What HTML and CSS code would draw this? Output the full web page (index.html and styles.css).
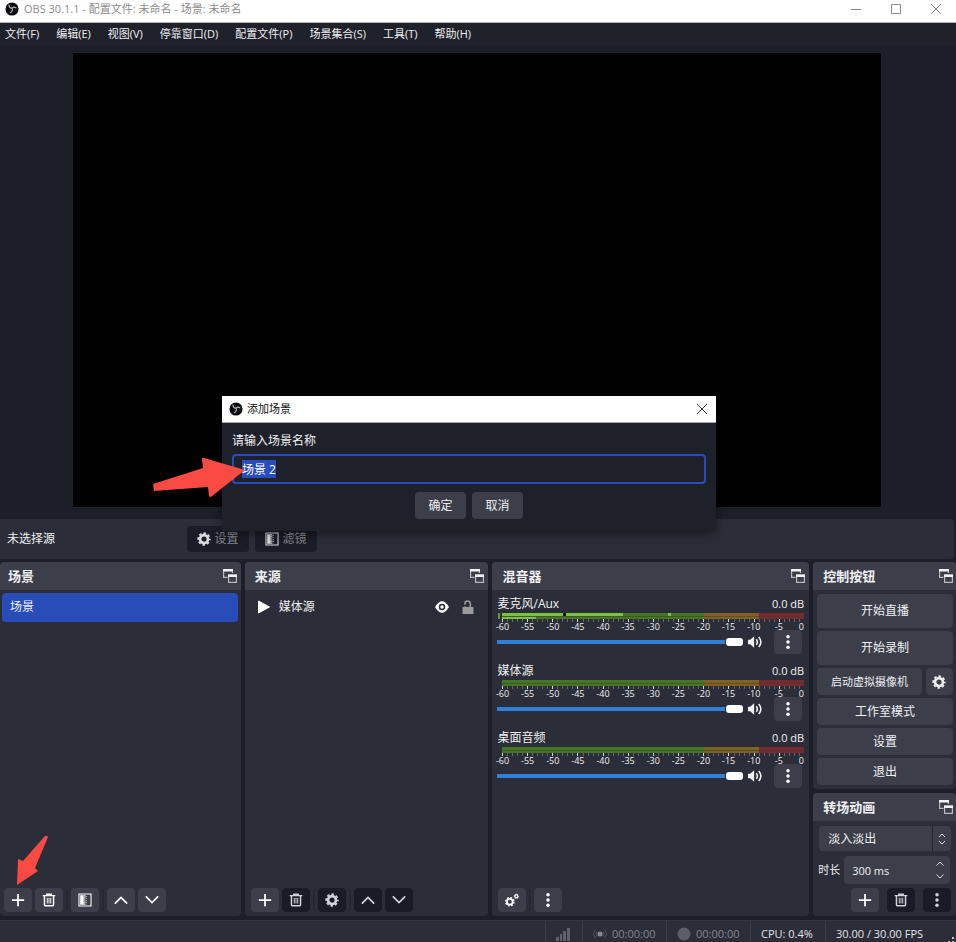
FILE: index.html
```html
<!DOCTYPE html>
<html lang="zh-CN">
<head>
  <meta charset="UTF-8" />
  <meta name="viewport" content="width=device-width, initial-scale=1.0" />
  <title>OBS 30.1.1</title>
  <link rel="stylesheet" href="styles.css">
</head>
<body>
  <svg class="sprite" aria-hidden="true">
    <symbol id="logo" viewBox="0 0 16 16">
      <circle cx="8" cy="8" r="7.5" fill="#0c0c0e"/>
      <g fill="none" stroke="#b4b4b8" stroke-width="1.3" stroke-linecap="round">
        <path d="M4.500 3.400C4.500 5.600 6 7 8 7.200"/>
        <path d="M8 7.200C9 5.600 10.800 5.400 12.600 6.800"/>
        <path d="M8 7.200C9 9 8.200 11.400 6 12.200"/>
      </g>
    </symbol>
    <symbol id="popout" viewBox="0 0 16 16">
      <g fill="none" stroke="#b9bac0" stroke-width="1.200">
        <path d="M5.500 9.400H1.600V1.600H10.400V5"/>
        <path d="M6.600 7H14.400V14.400H6.600Z"/>
      </g>
      <path d="M1 1h10v2.600H1zM6 6.400h9V9H6z" fill="#f2f2f4"/>
    </symbol>
    <symbol id="plus" viewBox="0 0 16 16">
      <path d="M8 1v14M1 8h14" stroke="currentColor" stroke-width="2" fill="none"/>
    </symbol>
    <symbol id="trash" viewBox="0 0 16 16">
      <path d="M.800 3h14.400M5.500 2.600V1.300h5v1.300M2.800 3.500V13q0 1.700 1.700 1.700h7q1.700 0 1.700-1.700V3.500" stroke="currentColor" stroke-width="1.700" fill="none"/>
      <path d="M6 5.500V12M8 5.500V12M10 5.500V12" stroke="currentColor" stroke-width="1.100"/>
    </symbol>
    <symbol id="filter" viewBox="0 0 16 16">
      <path d="M1.100 1.100h13.800v13.800H1.100z" stroke="currentColor" stroke-width="1.200" fill="none"/>
      <path d="M2.500 2.500h4v11h-4z" fill="currentColor"/>
      <path d="M7.500 2.500v11" stroke="currentColor" stroke-width="1.800" stroke-dasharray="1.400 1"/>
      <path d="M9.500 3.500v10" stroke="currentColor" stroke-width="1.400" stroke-dasharray="1 1.400" opacity=".7"/>
    </symbol>
    <symbol id="up" viewBox="0 0 16 16">
      <path d="M1.500 11.500l6.500-6.500 6.500 6.500" stroke="currentColor" stroke-width="2" fill="none" stroke-linecap="round"/>
    </symbol>
    <symbol id="down" viewBox="0 0 16 16">
      <path d="M1.500 4.500l6.500 6.500 6.500-6.500" stroke="currentColor" stroke-width="2" fill="none" stroke-linecap="round"/>
    </symbol>
    <symbol id="gear" viewBox="0 0 16 16">
      <circle cx="8" cy="8" r="4.500" fill="none" stroke="currentColor" stroke-width="3"/>
      <circle cx="8" cy="8" r="6.600" fill="none" stroke="currentColor" stroke-width="2" stroke-dasharray="2.900 2.284" stroke-dashoffset="1.450"/>
    </symbol>
    <symbol id="dots" viewBox="0 0 16 16">
      <g fill="currentColor"><circle cx="8" cy="2" r="2"/><circle cx="8" cy="8" r="2"/><circle cx="8" cy="14" r="2"/></g>
    </symbol>
    <symbol id="speaker" viewBox="0 0 16 16">
      <path d="M0 5.500H2.500L7 1.500v13L2.500 10.500H0z" fill="currentColor"/>
      <path d="M9.500 4.800q2.400 3.200 0 6.400M12.300 2.200q4.800 5.800 0 11.600" stroke="currentColor" stroke-width="1.800" fill="none"/>
    </symbol>
  </svg>

  <div class="app">
    <header class="titlebar">
      <svg class="icon-logo"><use href="#logo"/></svg>
      <span class="caption">OBS 30.1.1 - 配置文件: 未命名 - 场景: 未命名</span>
      <button class="win-btn" aria-label="最小化"><svg viewBox="0 0 10 10"><path d="M0 5.500h10"/></svg></button>
      <button class="win-btn" aria-label="最大化"><svg viewBox="0 0 10 10"><path d="M.5.5h9v9h-9z"/></svg></button>
      <button class="win-btn" aria-label="关闭"><svg viewBox="0 0 10 10"><path d="M0 0l10 10M10 0L0 10"/></svg></button>
    </header>

    <nav class="menubar">
      <a href="#">文件(F)</a>
      <a href="#">编辑(E)</a>
      <a href="#">视图(V)</a>
      <a href="#">停靠窗口(D)</a>
      <a href="#">配置文件(P)</a>
      <a href="#">场景集合(S)</a>
      <a href="#">工具(T)</a>
      <a href="#">帮助(H)</a>
    </nav>

    <main class="preview"><div class="canvas"></div></main>

    <div class="source-bar">
      <span class="no-source">未选择源</span>
      <button class="bar-btn"><svg class="icon"><use href="#gear"/></svg>设置</button>
      <button class="bar-btn"><svg class="icon"><use href="#filter"/></svg>滤镜</button>
    </div>

    <div class="docks">
      <section class="dock">
        <h2>场景<svg class="icon-pop"><use href="#popout"/></svg></h2>
        <ul class="list">
          <li class="scene selected">场景</li>
        </ul>
        <div class="toolbar">
          <button class="tool" aria-label="添加"><svg class="icon"><use href="#plus"/></svg></button>
          <button class="tool" aria-label="删除"><svg class="icon"><use href="#trash"/></svg></button>
          <i class="sep"></i>
          <button class="tool" aria-label="滤镜"><svg class="icon"><use href="#filter"/></svg></button>
          <i class="sep"></i>
          <button class="tool" aria-label="上移"><svg class="icon"><use href="#up"/></svg></button>
          <button class="tool" aria-label="下移"><svg class="icon"><use href="#down"/></svg></button>
        </div>
      </section>

      <section class="dock">
        <h2>来源<svg class="icon-pop"><use href="#popout"/></svg></h2>
        <ul class="list">
          <li class="source">
            <svg class="icon" viewBox="0 0 14 14"><path d="M1.500 1l11 6-11 6z" fill="#fff" stroke="#fff" stroke-linejoin="round"/></svg>
            <span class="source-name">媒体源</span>
            <svg class="icon" viewBox="0 0 14 14"><path d="M0 7q7-11.500 14 0q-7 11.500-14 0z" fill="#fff"/><circle cx="7" cy="7" r="3.200" fill="#2b2d38"/><circle cx="7" cy="7" r="1.700" fill="#fff"/></svg>
            <svg class="icon lock" viewBox="0 0 14 14"><path d="M1.500 7h11v7h-11z" fill="#9b9b9b"/><path d="M4 7.500V3.500Q4 1 6.500 1T9.300 3.500V7" fill="none" stroke="#9b9b9b" stroke-width="1.600"/><path d="M2.500 4.600h2.500v1.800H2.500z" fill="#2b2d38"/></svg>
          </li>
        </ul>
        <div class="toolbar">
          <button class="tool" aria-label="添加"><svg class="icon"><use href="#plus"/></svg></button>
          <button class="tool off" aria-label="删除"><svg class="icon"><use href="#trash"/></svg></button>
          <i class="sep"></i>
          <button class="tool off" aria-label="属性"><svg class="icon"><use href="#gear"/></svg></button>
          <i class="sep"></i>
          <button class="tool off" aria-label="上移"><svg class="icon"><use href="#up"/></svg></button>
          <button class="tool off" aria-label="下移"><svg class="icon"><use href="#down"/></svg></button>
        </div>
      </section>

      <section class="dock">
        <h2>混音器<svg class="icon-pop"><use href="#popout"/></svg></h2>
        <div class="mixer">
          <div class="channel">
            <div class="channel-head"><label for="vol1">麦克风/Aux</label><span>0.0 dB</span></div>
            <div class="meter live"><i class="level level-top"></i><i class="level level-bottom"></i><i class="clip"></i><i class="peak"></i></div>
            <div class="ticks"></div>
            <div class="scale"><span>-60</span><span>-55</span><span>-50</span><span>-45</span><span>-40</span><span>-35</span><span>-30</span><span>-25</span><span>-20</span><span>-15</span><span>-10</span><span>-5</span><span>0</span></div>
            <div class="channel-ctl">
              <input type="range" id="vol1" min="0" max="100" value="100">
              <svg class="icon-speaker"><use href="#speaker"/></svg>
              <button class="tool" aria-label="更多"><svg class="icon"><use href="#dots"/></svg></button>
            </div>
          </div>
          <div class="channel">
            <div class="channel-head"><label for="vol2">媒体源</label><span>0.0 dB</span></div>
            <div class="meter"></div>
            <div class="ticks"></div>
            <div class="scale"><span>-60</span><span>-55</span><span>-50</span><span>-45</span><span>-40</span><span>-35</span><span>-30</span><span>-25</span><span>-20</span><span>-15</span><span>-10</span><span>-5</span><span>0</span></div>
            <div class="channel-ctl">
              <input type="range" id="vol2" min="0" max="100" value="100">
              <svg class="icon-speaker"><use href="#speaker"/></svg>
              <button class="tool" aria-label="更多"><svg class="icon"><use href="#dots"/></svg></button>
            </div>
          </div>
          <div class="channel">
            <div class="channel-head"><label for="vol3">桌面音频</label><span>0.0 dB</span></div>
            <div class="meter"></div>
            <div class="ticks"></div>
            <div class="scale"><span>-60</span><span>-55</span><span>-50</span><span>-45</span><span>-40</span><span>-35</span><span>-30</span><span>-25</span><span>-20</span><span>-15</span><span>-10</span><span>-5</span><span>0</span></div>
            <div class="channel-ctl">
              <input type="range" id="vol3" min="0" max="100" value="100">
              <svg class="icon-speaker"><use href="#speaker"/></svg>
              <button class="tool" aria-label="更多"><svg class="icon"><use href="#dots"/></svg></button>
            </div>
          </div>
        </div>
        <div class="toolbar">
          <button class="tool" aria-label="高级音频属性">
            <svg class="icon" viewBox="0 0 16 16"><g fill="none" stroke="currentColor"><circle cx="5.500" cy="10" r="3.300" stroke-width="2"/><circle cx="5.500" cy="10" r="4.800" stroke-width="1.500" stroke-dasharray="2 1.770"/><circle cx="13" cy="3.800" r="1.700" stroke-width="1.400"/><circle cx="13" cy="3.800" r="2.600" stroke-width="1" stroke-dasharray="1.100 .942"/></g></svg>
          </button>
          <i class="sep"></i>
          <button class="tool" aria-label="更多"><svg class="icon"><use href="#dots"/></svg></button>
        </div>
      </section>

      <div class="side">
        <section class="dock">
          <h2>控制按钮<svg class="icon-pop"><use href="#popout"/></svg></h2>
          <div class="controls">
            <button class="btn tall">开始直播</button>
            <button class="btn tall">开始录制</button>
            <div class="btn-row">
              <button class="btn small">启动虚拟摄像机</button>
              <button class="btn gear" aria-label="虚拟摄像机设置"><svg class="icon"><use href="#gear"/></svg></button>
            </div>
            <button class="btn">工作室模式</button>
            <button class="btn">设置</button>
            <button class="btn">退出</button>
          </div>
        </section>

        <section class="dock transitions">
          <h2>转场动画<svg class="icon-pop"><use href="#popout"/></svg></h2>
          <div class="select">
            <select aria-label="转场动画"><option>淡入淡出</option></select>
            <svg viewBox="0 0 8 12"><path d="M1 4l3-3 3 3M1 8l3 3 3-3"/></svg>
          </div>
          <div class="duration">
            <label for="duration">时长</label>
            <div class="spin">
              <input type="text" id="duration" value="300 ms">
              <svg viewBox="0 0 8 18"><path d="M.5 4.500l3.500-3.500 3.500 3.500M.5 13.500l3.500 3.500 3.500-3.500"/></svg>
            </div>
          </div>
          <div class="toolbar">
            <button class="tool" aria-label="添加"><svg class="icon"><use href="#plus"/></svg></button>
            <button class="tool off" aria-label="删除"><svg class="icon"><use href="#trash"/></svg></button>
            <button class="tool off" aria-label="更多"><svg class="icon"><use href="#dots"/></svg></button>
          </div>
        </section>
      </div>
    </div>

    <footer class="statusbar">
      <div class="cell signal"><svg viewBox="0 0 14 14"><path d="M0 10h3v4H0zM4 7h2v7H4zM7 4h3v10H7zM11 1h3v13h-3z" fill="#5f616c"/></svg></div>
      <div class="cell timer"><svg viewBox="0 0 14 14"><circle cx="7" cy="7" r="2.500" fill="#8a8b94"/><path d="M4 4q-2 3 0 6M10 4q2 3 0 6M2 2.500q-3 4.500 0 9M12 2.500q3 4.500 0 9" fill="none" stroke="#4d4f5a"/></svg>00:00:00</div>
      <div class="cell timer"><svg viewBox="0 0 14 14"><circle cx="7" cy="7" r="6.500" fill="#5b5d68"/></svg>00:00:00</div>
      <div class="cell cpu">CPU: 0.4%</div>
      <div class="cell fps">30.00 / 30.00 FPS</div>
      <svg class="grip" viewBox="0 0 6 6"><path d="M4 0h2v2H4zM4 4h2v2H4zM0 4h2v2H0z" fill="#c4c5ca"/></svg>
    </footer>

    <form class="dialog" role="dialog" aria-labelledby="dialogTitle">
      <div class="dialog-title">
        <svg class="icon-logo"><use href="#logo"/></svg>
        <span id="dialogTitle">添加场景</span>
        <button type="button" class="close" aria-label="关闭"><svg viewBox="0 0 10 10"><path d="M0 0l10 10M10 0L0 10"/></svg></button>
      </div>
      <div class="dialog-body">
        <label for="sceneName">请输入场景名称</label>
        <input type="text" id="sceneName" value="场景 2">
        <div class="dialog-actions">
          <button type="button" class="btn">确定</button>
          <button type="button" class="btn">取消</button>
        </div>
      </div>
    </form>

    <svg class="arrow arrow-name" viewBox="0 0 94 42"><path d="M1 27L51 11 50 2Q50 0 52 1L93 13 60 39Q58 41 57 39L56 30 2 34Z" fill="#f94b44"/></svg>
    <svg class="arrow arrow-add" viewBox="0 0 34 52"><path d="M29 1Q31 0 32 2L19 33 22 36 1 50 2 24 7 26Z" fill="#f94b44"/></svg>
  </div>

  <script>
    const sceneName = document.getElementById('sceneName');
    sceneName.focus();
    sceneName.select();
  </script>
</body>
</html>
```
FILE: styles.css
```css
* {
  box-sizing: border-box;
}
body {
  margin: 0;
  background: #1c1e29;
  color: #f0f0f2;
  font-family: "Open Sans", "Noto Sans CJK SC", sans-serif;
  font-size: 12px;
  line-height: 16px;
}
button, input, select {
  font: inherit;
  color: inherit;
  border: none;
  padding: 0;
  margin: 0;
}
a {
  color: inherit;
  text-decoration: none;
}
svg {
  display: block;
  flex: none;
}
.sprite {
  position: absolute;
  width: 0;
  height: 0;
}
.app {
  position: relative;
  display: flex;
  flex-direction: column;
  height: 100vh;
  overflow: hidden;
}
.icon {
  width: 14px;
  height: 14px;
}
.icon-logo {
  width: 14px;
  height: 14px;
}

/* title bar and menu */
.titlebar {
  display: flex;
  align-items: center;
  height: 23px;
  padding: 0 0 5px 5px;
  background: #fff;
  border-bottom: 1px solid #b5b5b8;
  color: #8c8c8c;
  font-size: 11px;
}
.caption {
  flex: 1;
  padding-left: 5px;
}
.win-btn {
  display: flex;
  align-items: center;
  justify-content: center;
  width: 40px;
  height: 18px;
  background: none;
}
.win-btn svg, .close svg {
  width: 10px;
  height: 10px;
  fill: none;
  stroke: #888;
  overflow: visible;
}
.menubar {
  display: flex;
  gap: 17px;
  height: 22px;
  padding: 3px 5px;
  background: #1f212b;
  font-size: 11px;
}

/* preview */
.preview {
  flex: 1;
  min-height: 0;
  display: flex;
  justify-content: center;
  padding: 8px 2px 12px 0;
}
.canvas {
  height: 100%;
  aspect-ratio: 16 / 9;
  background: #000;
}
.source-bar {
  display: flex;
  align-items: center;
  gap: 6px;
  height: 40px;
  margin: 0 2px 3px 0;
  padding-left: 7px;
  background: #2b2d38;
  border-radius: 0 4px 4px 0;
}
.no-source {
  width: 174px;
}
.bar-btn {
  display: flex;
  align-items: center;
  justify-content: center;
  gap: 3px;
  width: 62px;
  height: 26px;
  border-radius: 4px;
  background: #1a1c27;
  color: #85868e;
}
.bar-btn .icon {
  color: #dcdde2;
}

/* docks */
.docks {
  display: grid;
  grid-template-columns: 241fr 244fr 317fr 143fr;
  column-gap: 4px;
}
.dock {
  display: flex;
  flex-direction: column;
  min-width: 0;
  background: #2b2d38;
  border-radius: 4px;
}
.dock h2 {
  display: flex;
  align-items: center;
  justify-content: space-between;
  height: 28px;
  margin: 0;
  padding: 0 3px 0 10px;
  background: #3c3f4a;
  border-radius: 4px 4px 0 0;
  font-size: 13px;
}
.icon-pop {
  width: 16px;
  height: 16px;
}
.dock:first-child h2 {
  padding-left: 8px;
}
.list {
  flex: 1;
  list-style: none;
  margin: 0;
  padding: 3px 3px 0 2px;
}
.scene {
  padding: 6px 8px 7px;
  border-radius: 4px;
}
.scene.selected {
  background: #284cb8;
}
.source {
  display: flex;
  align-items: center;
  gap: 12px;
  padding: 6px 10px;
}
.source-name {
  flex: 1;
  margin-left: -4px;
}
.toolbar {
  display: flex;
  gap: 3px;
  padding: 0 4px 4px;
}
.dock + .dock .toolbar {
  padding-left: 6px;
}
.tool {
  display: flex;
  align-items: center;
  justify-content: center;
  width: 28px;
  height: 24px;
  border-radius: 4px;
  background: #3c3f4a;
  color: #fff;
}
.tool.off {
  background: #191b26;
  color: #d2d3da;
}
.sep {
  width: 2px;
  margin: 2px 0;
  background: #252731;
}

/* mixer */
.mixer {
  flex: 1;
  padding: 6px 5px 0;
}
.channel {
  height: 67px;
}
.channel-head {
  display: flex;
  justify-content: space-between;
}
.channel-head span {
  font-size: 11px;
}
.meter {
  position: relative;
  height: 6px;
  margin: 1px 0 0 5px;
  background: linear-gradient(to right, #467526 67%, #806026 67% 85%, #7a2832 85%);
}
/* dark line between the two audio channels */
.meter::after {
  content: "";
  position: absolute;
  inset: 3px 0 auto;
  height: 1px;
  background: #2b4a1c88;
}
.level, .clip, .peak {
  position: absolute;
  height: 3px;
  background: #7cc142;
}
.level-top {
  top: 0;
  left: 0;
  width: 40%;
}
.level-bottom {
  top: 4px;
  left: 0;
  width: 11%;
  height: 2px;
}
.clip {
  top: 0;
  left: 20%;
  width: 3px;
  background: #0c1408;
}
.peak {
  top: 0;
  left: 55%;
  width: 3px;
}
.meter.live::before {
  content: "";
  position: absolute;
  left: -4px;
  width: 2px;
  height: 6px;
  background: #5e9a33;
}
.ticks {
  height: 3px;
  margin-left: 5px;
  background:
    repeating-linear-gradient(to right, #d8d9dd 0 1px, transparent 1px calc(100% / 12)),
    repeating-linear-gradient(to right, #62646e 0 1px, transparent 1px calc(100% / 60));
}
.scale {
  display: flex;
  justify-content: space-between;
  margin-left: 5px;
  font-size: 9px;
  line-height: 10px;
}
.scale span {
  display: flex;
  justify-content: center;
  width: 0;
}
.scale span:last-child {
  justify-content: flex-end;
}
.channel-ctl {
  display: flex;
  align-items: center;
  margin-top: -2px;
  padding-right: 2px;
}
.channel-ctl input {
  flex: 1;
  min-width: 0;
  height: 10px;
  appearance: none;
  background: linear-gradient(#2f80d8, #2f80d8) center / 100% 4px no-repeat;
}
.channel-ctl input::-webkit-slider-thumb {
  appearance: none;
  width: 17px;
  height: 8px;
  border-radius: 3px;
  background: #fff;
  box-shadow: 0 0 0 1px #2b2d38;
}
.icon-speaker {
  width: 16px;
  height: 14px;
  margin: 0 11px 0 4px;
}

/* right column */
.side {
  display: flex;
  flex-direction: column;
  gap: 4px;
}
.controls {
  display: flex;
  flex-direction: column;
  gap: 3px;
  padding: 4px 3px 4px 4px;
}
.btn {
  width: 100%;
  height: 27px;
  border-radius: 4px;
  background: #3c3f4a;
  text-align: center;
}
.btn.tall {
  height: 34px;
}
.btn.small {
  font-size: 11px;
}
.btn-row {
  display: flex;
  gap: 4px;
}
.btn.gear {
  display: flex;
  align-items: center;
  justify-content: center;
  flex: none;
  width: 27px;
}
.dock.transitions h2, .side .dock h2 {
  padding: 0 2px 0 10px;
}
.select, .spin {
  position: relative;
}
.select {
  margin: 5px 5px 5px 6px;
}
.select select {
  display: block;
  width: 100%;
  height: 25px;
  padding-left: 9px;
  appearance: none;
  border-radius: 4px;
  background: linear-gradient(#23252f, #23252f) right 18px top / 1px 100% no-repeat #3c3f4a;
}
.select svg, .spin svg {
  position: absolute;
  right: 5px;
  top: 7px;
  width: 8px;
  height: 12px;
  fill: none;
  stroke: #dcdde2;
}
.spin svg {
  right: 6px;
  top: 5px;
  height: 18px;
}
.duration {
  display: flex;
  align-items: center;
  gap: 4px;
  padding: 0 6px 0 5px;
  font-size: 11px;
}
.spin {
  flex: 1;
}
.spin input {
  display: block;
  width: 100%;
  height: 28px;
  padding-left: 8px;
  border-radius: 4px;
  background: #3c3f4a;
}
.transitions .toolbar {
  justify-content: flex-end;
  gap: 8px;
  padding: 4px 5px 4px;
}

/* status bar */
.statusbar {
  position: relative;
  display: flex;
  justify-content: flex-end;
  height: 22px;
  margin-top: 4px;
  background: #2b2d38;
  border-top: 1px solid #34363f;
  font-size: 11px;
}
.cell {
  display: flex;
  align-items: center;
  gap: 5px;
  padding: 5px 10px 0;
  border-left: 1px solid #3a3c47;
}
.cell svg {
  width: 14px;
  height: 14px;
}
.signal {
  width: 37px;
}
.timer {
  width: 84px;
  color: #85868e;
}
.cpu {
  width: 75px;
  color: #e4e4e8;
}
.fps {
  width: 131px;
  color: #e4e4e8;
}
.grip {
  position: absolute;
  right: 2px;
  bottom: -1px;
  width: 6px;
  height: 6px;
}

/* dialog */
.dialog {
  position: absolute;
  left: 222px;
  top: 396px;
  width: 494px;
  background: #1f212a;
  box-shadow: 0 3px 10px #0006;
}
.dialog-title {
  display: flex;
  align-items: center;
  gap: 4px;
  height: 27px;
  padding: 0 9px 0 7px;
  background: #fff;
  border-bottom: 1px solid #a8a8ac;
  color: #111;
  font-size: 11px;
}
.dialog-title span {
  flex: 1;
}
.close {
  background: none;
}
.close svg {
  stroke: #333;
}
.dialog-body {
  padding: 10px 10px 12px;
}
.dialog-body label {
  display: block;
}
.dialog-body input {
  display: block;
  width: 100%;
  height: 30px;
  margin-top: 5px;
  padding-left: 8px;
  border: 2px solid #284cb8;
  border-radius: 4px;
  outline: none;
  background: #1f212a;
}
.dialog-body input::selection {
  background: #284cb8;
  color: #fff;
}
.dialog-actions {
  display: flex;
  justify-content: center;
  gap: 6px;
  margin-top: 8px;
}
.dialog-actions .btn {
  width: 51px;
}

/* red pointers */
.arrow {
  position: absolute;
}
.arrow-name {
  left: 152px;
  top: 457px;
  width: 94px;
  height: 42px;
}
.arrow-add {
  left: 16px;
  top: 835px;
  width: 34px;
  height: 52px;
}
```
